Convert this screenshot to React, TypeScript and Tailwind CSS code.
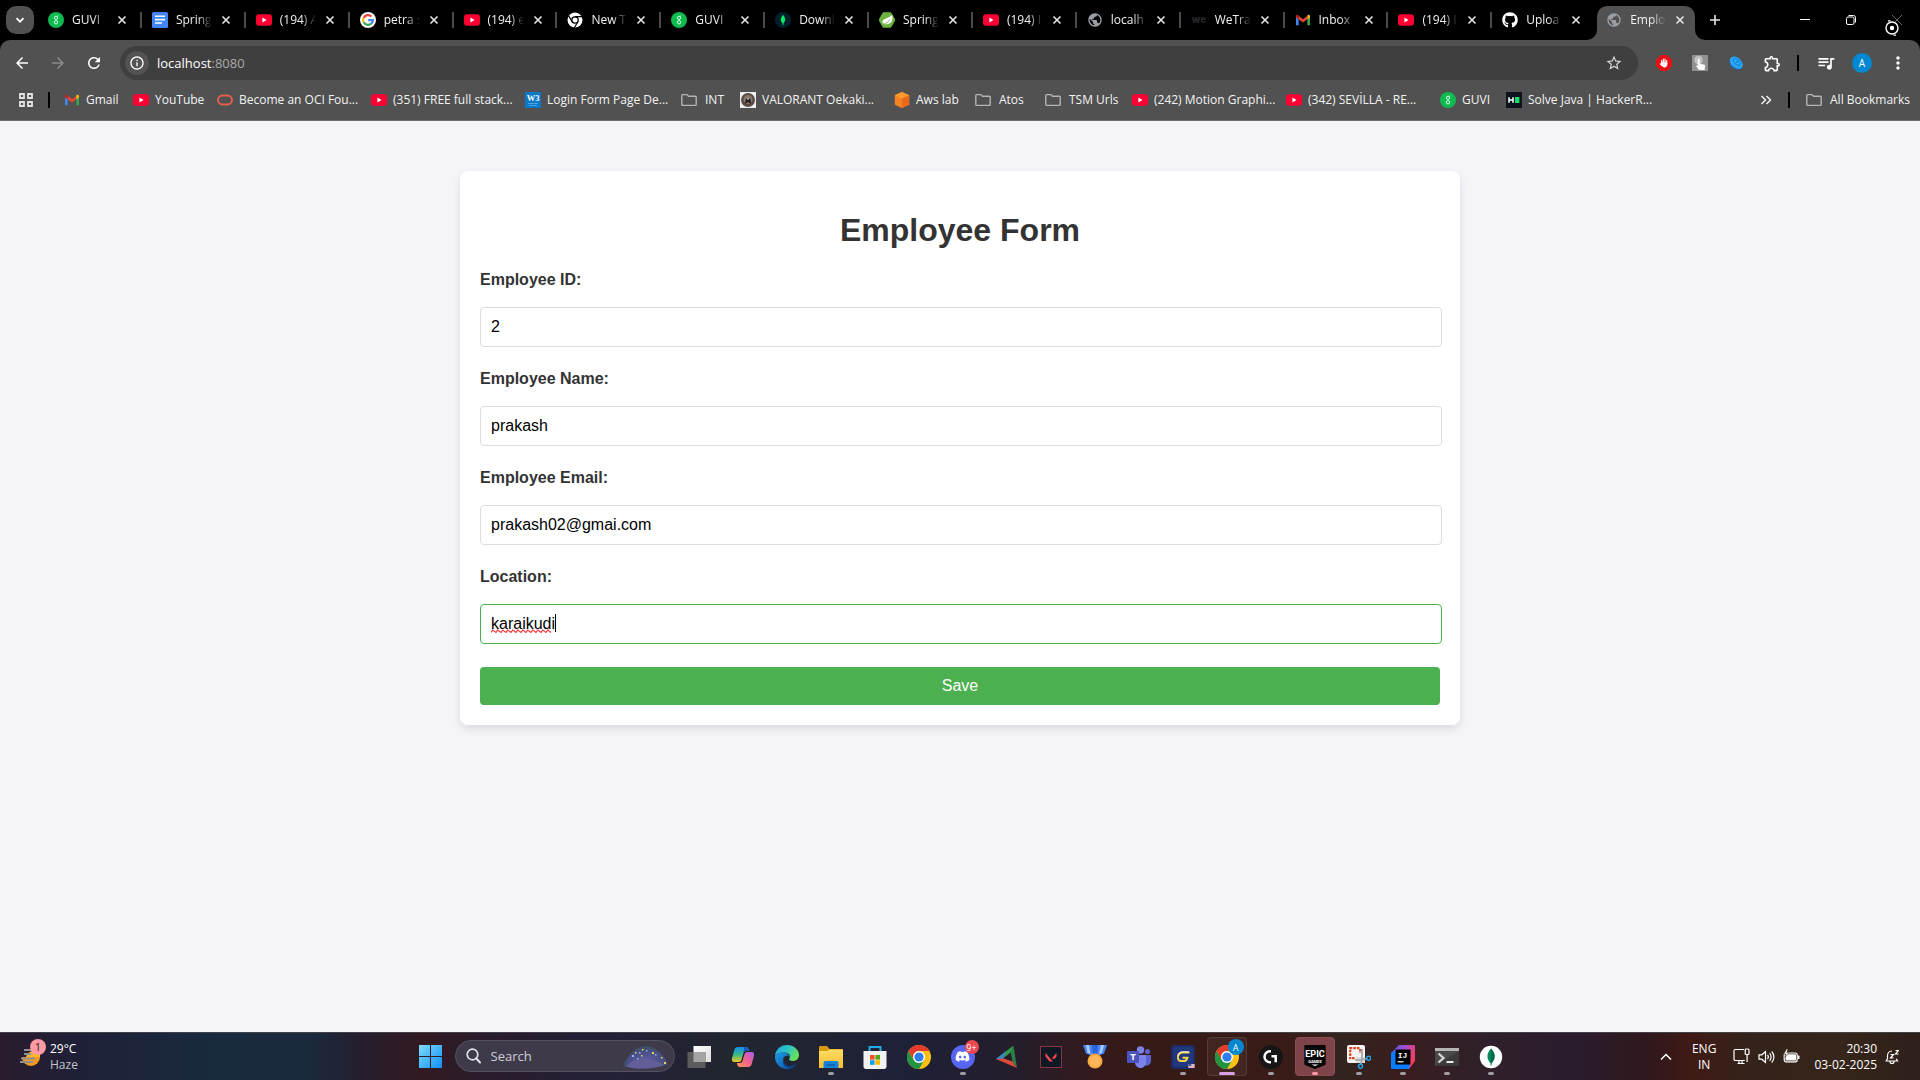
import React from 'react';
import { FaGithub, FaDiscord } from 'react-icons/fa';
import {
  MdArrowBack,
  MdArrowForward,
  MdRefresh,
  MdStarOutline,
  MdOutlineExtension,
  MdQueueMusic,
  MdMoreVert,
  MdPublic,
  MdInfoOutline,
} from 'react-icons/md';

type IconProps = { size?: number };

/* ---------- Site icons ---------- */

const Guvi = ({ size = 16 }: IconProps) => (
  <svg width={size} height={size} viewBox="0 0 16 16" className="shrink-0">
    <circle cx="8" cy="8" r="8" fill="#0fba4f" />
    <circle cx="8" cy="5.800" r="1.600" fill="none" stroke="#d8ffe6" strokeWidth="1" />
    <circle cx="8" cy="10.300" r="1.700" fill="none" stroke="#d8ffe6" strokeWidth="1" />
    <path d="M9.200 4.400l1-.8" stroke="#d8ffe6" strokeWidth="1" />
  </svg>
);

const YouTube = ({ size = 16 }: IconProps) => (
  <svg width={size} height={size} viewBox="0 0 16 16" className="shrink-0">
    <rect x="0" y="2.200" width="16" height="11.600" rx="3" fill="#ff0033" />
    <path d="M6.400 5.600v4.800L10.500 8z" fill="#fff" />
  </svg>
);

const Docs = ({ size = 16 }: IconProps) => (
  <svg width={size} height={size} viewBox="0 0 16 16" className="shrink-0">
    <rect width="16" height="16" rx="1.500" fill="#4285f4" />
    <path d="M3 4.200h10M3 7.600h10M3 11h7" stroke="#fff" strokeWidth="1.600" />
  </svg>
);

const Google = ({ size = 16 }: IconProps) => (
  <svg width={size} height={size} viewBox="0 0 16 16" className="shrink-0">
    <circle cx="8" cy="8" r="8" fill="#fff" />
    <g fill="none" strokeWidth="2.200">
      <path d="M11.400 4.500A4.900 4.900 0 0 0 3.700 5.700" stroke="#ea4335" />
      <path d="M3.700 5.700a4.900 4.900 0 0 0 0 4.600" stroke="#fbbc05" />
      <path d="M3.700 10.300a4.900 4.900 0 0 0 7.400 1.400" stroke="#34a853" />
      <path d="M11.100 11.700A4.900 4.900 0 0 0 12.900 8.200H8.200" stroke="#4285f4" />
    </g>
  </svg>
);

const ChromeMono = ({ size = 16 }: IconProps) => (
  <svg width={size} height={size} viewBox="0 0 16 16" className="shrink-0">
    <circle cx="8" cy="8" r="7.500" fill="#fff" />
    <circle cx="8" cy="8" r="3.200" fill="#fff" stroke="#000" strokeWidth="1.300" />
    <path d="M8 4.600h7M5.200 9.700L1.600 3.900M10.800 9.700l-3.400 6" stroke="#000" strokeWidth="1.200" />
  </svg>
);

const MongoTab = ({ size = 16 }: IconProps) => (
  <svg width={size} height={size} viewBox="0 0 16 16" className="shrink-0">
    <circle cx="8" cy="8" r="8" fill="#001e2b" />
    <path d="M8 2.800c2.800 3 2.800 6.600 0 9-2.800-2.400-2.800-6 0-9z" fill="#00ed64" />
    <path d="M8 9v4.400" stroke="#00ed64" strokeWidth=".8" />
  </svg>
);

const SpringLeaf = ({ size = 16 }: IconProps) => (
  <svg width={size} height={size} viewBox="0 0 16 16" className="shrink-0">
    <path d="M4.200.8h7.600L16 8l-4.200 7.200H4.200L0 8z" fill="#6db33f" stroke="#6db33f" strokeLinejoin="round" />
    <path d="M13.200 3c.9 4.300-.2 8.800-5 9.200-2 .2-3.600-.3-4.700-1.200C2.400 6.300 9 6.800 13.200 3z" fill="#fff" />
    <path d="M3.400 12.600c3.200-.8 5.800-2.400 7.600-5" stroke="#6db33f" strokeWidth=".8" fill="none" />
  </svg>
);

const Globe = ({ size = 16 }: IconProps) => (
  <span className="shrink-0 text-[#9aa0a6]">
    <MdPublic size={size} />
  </span>
);

const We = ({ size = 16 }: IconProps) => (
  <svg width={size} height={size} viewBox="0 0 16 16" className="shrink-0">
    <text x="8" y="10.500" textAnchor="middle" fontSize="10" fontWeight="800" fontFamily="Inter, sans-serif" fill="#26262a">
      we
    </text>
  </svg>
);

const Gmail = ({ size = 16 }: IconProps) => (
  <svg width={size} height={size} viewBox="0 0 16 16" className="shrink-0">
    <path d="M1 4v9.200h2.600V6.500z" fill="#4285f4" />
    <path d="M15 4v9.200h-2.600V6.500z" fill="#34a853" />
    <path d="M3.600 3.800L8 7.200l4.400-3.400v3.400L8 10.600 3.600 7.200z" fill="#ea4335" />
    <path d="M1 4.500c0-1.800 1.500-2.100 2.600-1.200v3.900L1 5.400z" fill="#c5221f" />
    <path d="M15 4.500c0-1.800-1.500-2.100-2.600-1.200v3.900L15 5.400z" fill="#fbbc04" />
  </svg>
);

const Github = ({ size = 16 }: IconProps) => (
  <span className="shrink-0 text-white">
    <FaGithub size={size} />
  </span>
);

const Oracle = () => (
  <svg width={16} height={16} viewBox="0 0 16 16" className="shrink-0">
    <rect x="1" y="3.500" width="14" height="9" rx="4.500" fill="none" stroke="#e8604c" strokeWidth="1.900" />
  </svg>
);

const W3 = () => (
  <svg width={16} height={16} viewBox="0 0 16 16" className="shrink-0">
    <rect width="16" height="16" fill="#0a78c8" />
    <text x="8" y="8.500" textAnchor="middle" fontSize="8.500" fontWeight="700" fontFamily="Liberation Serif, serif" fill="#fff">
      W3
    </text>
    <path d="M3 11.500h10M4 13.500h8" stroke="#5fb0ea" strokeWidth=".8" />
  </svg>
);

const Folder = () => (
  <svg width={16} height={16} viewBox="0 0 16 16" className="mr-0.5 shrink-0">
    <path d="M.8 3.400c0-.5.4-.8.8-.8h4.300l1.600 1.700h6.900c.5 0 .8.400.8.800v7.500c0 .5-.3.800-.8.800H1.600c-.4 0-.8-.3-.8-.8z" fill="none" stroke="#b4b4b4" strokeWidth="1.400" />
  </svg>
);

const Oekaki = () => (
  <svg width={16} height={16} viewBox="0 0 16 16" className="shrink-0">
    <rect width="16" height="16" fill="#eee" />
    <circle cx="8" cy="8" r="7" fill="#5b4a44" />
    <circle cx="8" cy="7.500" r="4.500" fill="#8a7466" />
    <path d="M5 12l1-5 2-2 2.500 2 .5 5-3-2z" fill="#231d1e" />
    <circle cx="8" cy="6.500" r="1.200" fill="#9fb0bd" />
  </svg>
);

const Aws = () => (
  <svg width={16} height={16} viewBox="0 0 16 16" className="shrink-0">
    <path d="M8 0l7.200 3.200v9.600L8 16 .8 12.800V3.200z" fill="#f58220" />
    <path d="M8 0l7.200 3.200L8 6.600.8 3.200z" fill="#ff9a2e" />
    <path d="M8 6.600l7.200-3.400v9.600L8 16z" fill="#e8681c" />
  </svg>
);

const HackerRank = () => (
  <svg width={16} height={16} viewBox="0 0 16 16" className="shrink-0">
    <rect width="16" height="16" fill="#0e141e" />
    <path d="M3 5.200v5.600M7 5.200v5.600M3 8h4" stroke="#fff" strokeWidth="1.500" />
    <rect x="9" y="5" width="4.400" height="6" fill="#12e06a" />
  </svg>
);

/* ---------- Browser chrome ---------- */

const Cross = () => (
  <svg width="10" height="10" viewBox="0 0 10 10">
    <path d="M1.500 1.500l7 7M8.500 1.500l-7 7" stroke="#e6e6e6" strokeWidth="1.600" />
  </svg>
);

const tabs: { icon: React.FC<IconProps>; title: string }[] = [
  { icon: Guvi, title: 'GUVI' },
  { icon: Docs, title: 'Spring' },
  { icon: YouTube, title: '(194) A' },
  { icon: Google, title: 'petra s' },
  { icon: YouTube, title: '(194) e' },
  { icon: ChromeMono, title: 'New T' },
  { icon: Guvi, title: 'GUVI' },
  { icon: MongoTab, title: 'Downl' },
  { icon: SpringLeaf, title: 'Spring' },
  { icon: YouTube, title: '(194) I' },
  { icon: Globe, title: 'localh' },
  { icon: We, title: 'WeTra' },
  { icon: Gmail, title: 'Inbox' },
  { icon: YouTube, title: '(194) I' },
  { icon: Github, title: 'Uploa' },
  { icon: Globe, title: 'Emplo' },
];

function TabStrip() {
  return (
    <div className="flex h-10 items-stretch bg-black pl-1.5">
      <button aria-label="Search tabs" className="mr-[3px] mt-1.5 flex h-7 w-7 items-center justify-center rounded-[10px] bg-[#515151]">
        <svg width="10" height="10" viewBox="0 0 10 10">
          <path d="M1.500 3.200L5 6.700l3.500-3.500" fill="none" stroke="#fff" strokeWidth="1.700" />
        </svg>
      </button>
      <div className="flex min-w-0 flex-1">
        {tabs.map(({ icon: Icon, title }, i) => {
          const active = i === tabs.length - 1;
          return (
            <div key={i} className="relative flex min-w-0 flex-1 pt-1.5">
              {active && (
                <svg className="absolute bottom-0 -left-2 h-[10px] w-[10px]" viewBox="0 0 10 10">
                  <path d="M10 0v10H0A10 10 0 0 0 10 0z" fill="#515151" />
                </svg>
              )}
              {active && (
                <svg className="absolute bottom-0 -right-1.5 h-[10px] w-[10px]" viewBox="0 0 10 10">
                  <path d="M0 0v10h10A10 10 0 0 1 0 0z" fill="#515151" />
                </svg>
              )}
              <div
                className={
                  active
                    ? 'ml-0.5 mr-1 flex min-w-0 flex-1 items-center rounded-t-[10px] bg-[#515151] pb-1.5 pl-[9px]'
                    : 'ml-0.5 mr-1 flex min-w-0 flex-1 items-center pb-1.5 pl-[9px]'
                }
              >
                <Icon />
                <span className="ml-2 w-[36px] overflow-hidden whitespace-nowrap text-[12px] leading-4 text-[#f1f1f1] [mask-image:linear-gradient(to_right,black_60%,transparent)]">
                  {title}
                </span>
                <button aria-label="Close tab" className="ml-1.5 flex h-4 w-4 shrink-0 items-center justify-center">
                  <Cross />
                </button>
              </div>
              {i < tabs.length - 2 && <div className="absolute -right-px top-3 h-4 w-0.5 bg-[#4b4b4b]" />}
            </div>
          );
        })}
      </div>
      <div className="relative flex w-[221px] shrink-0 items-center pb-[7px]">
        <button aria-label="New tab" className="ml-2 mt-1.5 flex h-4 w-4 items-center justify-center">
          <svg width="12" height="12" viewBox="0 0 12 12">
            <path d="M6 1v10M1 6h10" stroke="#e8e8e8" strokeWidth="1.600" />
          </svg>
        </button>
        <button aria-label="Minimize" className="ml-[74px] mt-1.5 flex h-4 w-4 items-center justify-center">
          <svg width="10" height="10" viewBox="0 0 10 10">
            <path d="M0 4.500h10" stroke="#fff" />
          </svg>
        </button>
        <button aria-label="Restore" className="ml-[30px] mt-1.5 flex h-4 w-4 items-center justify-center">
          <svg width="10" height="10" viewBox="0 0 10 10">
            <rect x=".5" y="2" width="7.500" height="7.500" rx="1.500" fill="none" stroke="#fff" />
            <path d="M2.500.5h5a2 2 0 0 1 2 2v5" fill="none" stroke="#fff" />
          </svg>
        </button>
        <button aria-label="Close" className="ml-[30px] mt-1.5 flex h-4 w-4 items-center justify-center">
          <svg width="10" height="10" viewBox="0 0 10 10">
            <path d="M0 0l10 10M10 0L0 10" stroke="#666" />
          </svg>
        </button>
        <svg className="absolute right-5 top-5 h-4 w-4" viewBox="0 0 16 16">
          <circle cx="8" cy="8" r="6" fill="#000" stroke="#fff" strokeWidth="1.400" />
          <circle cx="8" cy="8" r="2.200" fill="#fff" />
          <path d="M4 .8h2.500M9.500 15.200H12" stroke="#fff" strokeWidth="1.200" />
        </svg>
      </div>
    </div>
  );
}

function Toolbar() {
  return (
    <div className="flex h-11 items-center px-3 pt-0.5 text-white">
      <button aria-label="Back" className="flex w-5 justify-center">
        <MdArrowBack size={18} />
      </button>
      <button aria-label="Forward" className="ml-4 flex w-5 justify-center text-[#8b8b8b]">
        <MdArrowForward size={18} />
      </button>
      <button aria-label="Reload" className="ml-4 flex w-5 justify-center">
        <MdRefresh size={18} />
      </button>
      <div className="ml-4 flex h-[34px] min-w-0 flex-1 items-center rounded-full bg-[#3f3f3f] pl-[5px] pr-[15px]">
        <button aria-label="Site information" className="flex h-6 w-6 items-center justify-center rounded-full bg-[#535353]">
          <MdInfoOutline size={16} />
        </button>
        <span className="ml-2 flex-1 text-[13px] leading-5">
          localhost<span className="text-[#a9a9a9]">:8080</span>
        </span>
        <button aria-label="Bookmark this tab" className="text-[#d5d5d5]">
          <MdStarOutline size={18} />
        </button>
      </div>
      <div className="ml-4 flex items-center gap-4">
        <button aria-label="Ad blocker" className="flex w-5 justify-center">
          <svg width="16" height="16" viewBox="0 0 16 16">
            <path d="M5 0h6l5 5v6l-5 5H5l-5-5V5z" fill="#e60f12" />
            <path d="M5.600 8.500V5.500M7.300 8V4.200M9 8V4.200M10.700 9V5.500M4.300 8.800l1.600 1.900" stroke="#fff" strokeWidth="1.200" strokeLinecap="round" />
            <path d="M5 7.500h6.300v2.600a2.800 2.800 0 0 1-5.200 1z" fill="#fff" />
          </svg>
        </button>
        <button aria-label="Clicker" className="flex w-5 justify-center">
          <svg width="16" height="16" viewBox="0 0 16 16">
            <rect width="16" height="16" rx="1" fill="#929292" />
            <circle cx="6.500" cy="5" r="3.800" fill="#bdbdbd" stroke="#d8d8d8" strokeWidth=".6" />
            <path d="M5.700 4.500a1 1 0 0 1 2 0v4l4.500 1.300c.7.300 1 .8.900 1.500L12.500 15H7l-3-4 .8-.8 1 .6z" fill="#fff" />
          </svg>
        </button>
        <button aria-label="Extension" className="flex w-5 justify-center">
          <svg width="16" height="16" viewBox="0 0 16 16">
            <path d="M1.800 4C.5 9 4 14 10 14.500l4.500-1z" fill="#1673e6" />
            <ellipse cx="8.400" cy="7.600" rx="7.300" ry="5" transform="rotate(42 8.400 7.600)" fill="#27a9f5" />
            <ellipse cx="9" cy="6.900" rx="4.400" ry="2.600" transform="rotate(42 9 6.900)" fill="none" stroke="#1478d8" strokeWidth=".9" />
            <circle cx="9.200" cy="6.700" r="1" fill="#1478d8" />
          </svg>
        </button>
        <button aria-label="Extensions" className="flex w-5 justify-center">
          <MdOutlineExtension size={19} />
        </button>
      </div>
      <div className="ml-[15px] h-4 w-0.5 bg-black" />
      <button aria-label="Media controls" className="ml-[17px] flex w-5 justify-center">
        <MdQueueMusic size={20} />
      </button>
      <button aria-label="Profile" className="ml-4 flex h-5 w-5 items-center justify-center rounded-full bg-[#0288d1] text-[10px] leading-none">
        A
      </button>
      <button aria-label="Menu" className="ml-4 flex w-5 justify-center">
        <MdMoreVert size={20} />
      </button>
    </div>
  );
}

const bookmarks: { icon: React.ReactNode; label: string; width: string }[] = [
  { icon: <Gmail />, label: 'Gmail', width: 'w-[69px]' },
  { icon: <YouTube />, label: 'YouTube', width: 'w-[84px]' },
  { icon: <Oracle />, label: 'Become an OCI Fou...', width: 'w-[154px]' },
  { icon: <YouTube />, label: '(351) FREE full stack...', width: 'w-[154px]' },
  { icon: <W3 />, label: 'Login Form Page De...', width: 'w-[156px]' },
  { icon: <Folder />, label: 'INT', width: 'w-[59px]' },
  { icon: <Oekaki />, label: 'VALORANT Oekaki...', width: 'w-[154px]' },
  { icon: <Aws />, label: 'Aws lab', width: 'w-[81px]' },
  { icon: <Folder />, label: 'Atos', width: 'w-[70px]' },
  { icon: <Folder />, label: 'TSM Urls', width: 'w-[87px]' },
  { icon: <YouTube />, label: '(242) Motion Graphi...', width: 'w-[154px]' },
  { icon: <YouTube />, label: '(342) SEVİLLA - RE...', width: 'w-[154px]' },
  { icon: <Guvi />, label: 'GUVI', width: 'w-[66px]' },
  { icon: <HackerRank />, label: 'Solve Java | HackerR...', width: 'w-[154px]' },
];

function BookmarksBar() {
  return (
    <div className="flex h-[37px] items-center border-b border-[#6f6f6f] pb-1 pl-[19px] pr-[10px] text-[12px] leading-4 text-[#f3f3f3]">
      <button aria-label="Apps">
        <svg width="14" height="14" viewBox="0 0 14 14">
          <path d="M1 1h4v4H1zM9 1h4v4H9zM1 9h4v4H1zM9 9h4v4H9z" fill="none" stroke="#e3e3e3" strokeWidth="1.800" />
        </svg>
      </button>
      <div className="ml-[15px] mr-3.5 h-4 w-0.5 bg-black" />
      <div className="flex min-w-0 flex-1">
        {bookmarks.map((b) => (
          <div key={b.label} className={`${b.width} shrink-0`}>
            <button className="flex items-center gap-1.5 whitespace-nowrap">
              {b.icon}
              {b.label}
            </button>
          </div>
        ))}
      </div>
      <button aria-label="More bookmarks">
        <svg width="12" height="10" viewBox="0 0 12 10">
          <path d="M1.500 1l4 4-4 4M6.500 1l4 4-4 4" fill="none" stroke="#f0f0f0" strokeWidth="1.500" />
        </svg>
      </button>
      <div className="ml-4 mr-4 h-4 w-0.5 bg-black" />
      <button className="flex items-center gap-1.5 whitespace-nowrap">
        <Folder />
        All Bookmarks
      </button>
    </div>
  );
}

/* ---------- Form ---------- */

const fields = [
  { id: 'employee-id', label: 'Employee ID:', value: '2' },
  { id: 'employee-name', label: 'Employee Name:', value: 'prakash' },
  { id: 'employee-email', label: 'Employee Email:', value: 'prakash02@gmai.com' },
  { id: 'location', label: 'Location:', value: 'karaikudi', focused: true },
];

function EmployeeForm() {
  return (
    <form
      onSubmit={(e) => e.preventDefault()}
      className="mx-auto mt-[50px] w-full max-w-[1000px] rounded-lg bg-white p-5 font-['Liberation_Sans',Arial,sans-serif] shadow-[0_4px_8px_rgba(0,0,0,0.1)]"
    >
      <h1 className="mb-[22px] mt-[21px] text-center text-[32px] font-bold leading-[37px] text-[#333]">Employee Form</h1>
      {fields.map((f) => (
        <div key={f.id} className="mb-[23px]">
          <label htmlFor={f.id} className="mb-[18px] block text-base font-bold leading-[18px] text-[#333]">
            {f.label}
          </label>
          <div className="relative">
            <input
              id={f.id}
              type="text"
              defaultValue={f.value}
              spellCheck={false}
              className={
                f.focused
                  ? 'block h-10 w-[calc(100%+2px)] rounded border border-[#4caf50] bg-white px-2.5 text-base text-black outline-none'
                  : 'block h-10 w-[calc(100%+2px)] rounded border border-[#ddd] bg-white px-2.5 text-base text-black outline-none'
              }
            />
            {f.focused && (
              <svg className="pointer-events-none absolute left-[11px] top-2.5 h-5 w-[66px]" viewBox="0 0 66 20">
                <path
                  d="M0 18.500l1.700-2.500 3.300 2.500 1.700-2.500 3.300 2.500 1.700-2.500 3.300 2.500 1.700-2.500 3.300 2.500 1.700-2.500 3.300 2.500 1.700-2.500 3.300 2.500 1.700-2.500 3.300 2.500 1.700-2.500 3.300 2.500 1.700-2.500 3.300 2.500 1.700-2.500 3.300 2.500 1.700-2.500 3.300 2.500 1.700-2.500 3.300 2.500"
                  fill="none"
                  stroke="#f0383c"
                  strokeWidth="1.200"
                />
                <path d="M64.500 0v18" stroke="#000" />
              </svg>
            )}
          </div>
        </div>
      ))}
      <button type="submit" className="block h-[38px] w-full rounded bg-[#4caf50] text-base leading-[18px] text-white">
        Save
      </button>
    </form>
  );
}

/* ---------- Taskbar ---------- */

const ChromeColor = () => (
  <svg width="24" height="24" viewBox="0 0 24 24">
    <circle cx="12" cy="12" r="12" fill="#fbc116" />
    <path d="M1.600 6A12 12 0 0 0 12 24l5.200-9L12 12 6.800 15z" fill="#229342" />
    <path d="M1.600 6A12 12 0 0 1 22.400 6H12a6 6 0 0 0-5.200 9z" fill="#e33b2e" />
    <circle cx="12" cy="12" r="6" fill="#fff" />
    <circle cx="12" cy="12" r="4.600" fill="#2d7df0" />
  </svg>
);

type Task = {
  name: string;
  art: React.ReactNode;
  running?: boolean;
  badge?: React.ReactNode;
  frame?: 'active' | 'alert';
};

const tasks: Task[] = [
  {
    name: 'Task view',
    art: (
      <svg width="24" height="24" viewBox="0 0 24 24">
        <defs>
          <linearGradient id="tv" x1="0" y1="0" x2="1" y2="1">
            <stop offset="0" stopColor="#fff" />
            <stop offset="1" stopColor="#dcdcdc" />
          </linearGradient>
        </defs>
        <rect x="6.500" y="1" width="17.500" height="16" fill="url(#tv)" />
        <rect x=".5" y="7" width="18" height="16" fill="#5c5c5c" />
        <rect x="6.500" y="7" width="12" height="10" fill="#a3a3a3" />
      </svg>
    ),
  },
  {
    name: 'Copilot',
    art: (
      <svg width="24" height="24" viewBox="0 0 24 24">
        <defs>
          <linearGradient id="cpA" x1="0" y1="0" x2="0" y2="1">
            <stop offset="0" stopColor="#1a8bec" />
            <stop offset=".5" stopColor="#33b98a" />
            <stop offset="1" stopColor="#f2c81e" />
          </linearGradient>
          <linearGradient id="cpB" x1="1" y1="0" x2="0" y2="1">
            <stop offset="0" stopColor="#a55cf0" />
            <stop offset=".5" stopColor="#f0628c" />
            <stop offset="1" stopColor="#ff9a52" />
          </linearGradient>
        </defs>
        <path d="M7 2h8c2 0 2.600 1.500 3.200 4h-3c-1.600 0-2.400.8-2.900 2.500l-1.600 5.700C10 16.500 9 17 7 17H3.500C1 17 .5 15 1.200 12.500L3.300 5C4 2.800 5 2 7 2z" fill="url(#cpA)" />
        <path d="M14.500 2c2 0 2.600 1.500 3.200 4h-3.200c-1 0-1.800.5-2.300 1.600L13.500 2z" fill="#1a55c8" />
        <path d="M17 22H9c-2 0-2.600-1.500-3.200-4h3c1.600 0 2.400-.8 2.900-2.500l1.600-5.700C14 7.500 15 7 17 7h3.500c2.500 0 3 2 2.300 4.500L20.700 19c-.7 2.200-1.700 3-3.700 3z" fill="url(#cpB)" />
      </svg>
    ),
  },
  {
    name: 'Edge',
    art: (
      <svg width="24" height="24" viewBox="0 0 24 24">
        <defs>
          <linearGradient id="edA" x1="0" y1="0" x2="1" y2=".4">
            <stop offset="0" stopColor="#1fa5dc" />
            <stop offset=".55" stopColor="#2cc3c8" />
            <stop offset="1" stopColor="#66e05a" />
          </linearGradient>
          <linearGradient id="edB" x1="0" y1="0" x2="1" y2="1">
            <stop offset="0" stopColor="#1b9be6" />
            <stop offset="1" stopColor="#0c55a8" />
          </linearGradient>
        </defs>
        <path d="M0 11C.6 4.600 5.600 0 12 0c7 0 12 5 12 10 0 3.700-2.800 6-6.200 6-2.800 0-4.300-1-3.500-2.200 1.400-2.100.6-6.300-4.600-6.300C5 7.500 1.500 8.500 0 11z" fill="url(#edA)" />
        <path d="M0 11.500C1.500 8.500 5 6.800 9 7.300c2.500.3 4.600 1.800 5 4-3-1.800-6 .2-5.800 3.700.2 4.500 4 7 7.800 7.500-1.200.9-2.600 1.500-4 1.500-6.600 0-12-5.400-12-12z" fill="url(#edB)" />
        <path d="M8.200 14.600c-.3 5 6.300 9.200 13.800 4-1.300 2.300-3.600 4.200-6.200 5C11.500 23.800 6 19.800 8.200 14.600z" fill="#0f4388" />
      </svg>
    ),
  },
  {
    name: 'File Explorer',
    running: true,
    art: (
      <svg width="24" height="24" viewBox="0 0 24 24">
        <defs>
          <linearGradient id="fe" x1="0" y1="0" x2="0" y2="1">
            <stop offset="0" stopColor="#ffdc66" />
            <stop offset="1" stopColor="#f7bd2e" />
          </linearGradient>
        </defs>
        <path d="M0 2.500C0 1.500.5 1 1.500 1H8l2.500 3H23c.6 0 1 .4 1 1v5H0z" fill="#d99a10" />
        <path d="M0 6h8l2.500-1.500H23c.6 0 1 .4 1 1V23H0z" fill="url(#fe)" />
        <path d="M4.500 23v-4.500c0-2 .8-2.500 2.500-2.500h10c1.700 0 2.500.5 2.500 2.500V23z" fill="#1584d8" />
        <path d="M8 20h8" stroke="#0a5ca4" strokeWidth="1.400" />
      </svg>
    ),
  },
  {
    name: 'Microsoft Store',
    art: (
      <svg width="24" height="24" viewBox="0 0 24 24">
        <path d="M6.500 7V2h11v5" fill="none" stroke="#22a9e8" strokeWidth="2" />
        <path d="M.5 6h23v15.500c0 1.600-.9 2.500-2.500 2.500H3C1.400 24 .5 23.100.5 21.500z" fill="#f1f1f1" />
        <rect x="7" y="10" width="4.600" height="4.600" fill="#f25022" />
        <rect x="12.400" y="10" width="4.600" height="4.600" fill="#55a513" />
        <rect x="7" y="15.200" width="4.600" height="4.600" fill="#10a0ea" />
        <rect x="12.400" y="15.200" width="4.600" height="4.600" fill="#ffb900" />
      </svg>
    ),
  },
  { name: 'Chrome', art: <ChromeColor /> },
  {
    name: 'Discord',
    running: true,
    art: (
      <span className="flex h-6 w-6 items-center justify-center rounded-full bg-[#5865f2] text-white">
        <FaDiscord size={15} />
      </span>
    ),
    badge: (
      <span className="absolute right-1.5 top-[7px] flex h-3.5 w-3.5 items-center justify-center rounded-full bg-[#ed4850] text-[9px] leading-none text-white">
        9+
      </span>
    ),
  },
  {
    name: 'Prism',
    art: (
      <svg width="24" height="24" viewBox="0 0 24 24">
        <path d="M18.500.5L1 14l8-1.500 7-5z" fill="#2f9a4a" />
        <path d="M18.500.5L22 23l-5-7-1.500-9z" fill="#2a7f45" />
        <path d="M1 14l10-8-2 6.500-1 2.500z" fill="#3b86c6" />
        <path d="M1 14l21 9-5-7-8-2.500z" fill="#e04a3d" />
        <path d="M15.500 7.500l1.800 8.700-8.300-2.700z" fill="#281d26" />
      </svg>
    ),
  },
  {
    name: 'Valorant',
    art: (
      <svg width="24" height="24" viewBox="0 0 24 24">
        <rect x="1.500" y="1.500" width="21" height="21" fill="#0f1923" stroke="#8c3340" />
        <path d="M6.500 8v3.500l4 5h3.300zM17.500 8v3.500l-1.800 2.200h-3z" fill="#ff4655" />
      </svg>
    ),
  },
  {
    name: 'Medal',
    art: (
      <svg width="24" height="24" viewBox="0 0 24 24">
        <path d="M0 0h24l-3 8.500-9 3.500-9-3.500z" fill="#4387f5" />
        <path d="M3 0h3l1.500 9-3-1zM18 0h3l-2 8-3 1z" fill="#a9cbff" />
        <path d="M9 0h6l-1 10h-4z" fill="#2f62dd" />
        <circle cx="12" cy="16" r="7.500" fill="#f5a742" />
        <circle cx="12" cy="16" r="5.500" fill="#ffb65c" />
      </svg>
    ),
  },
  {
    name: 'Teams',
    art: (
      <svg width="24" height="24" viewBox="0 0 24 24">
        <circle cx="20.500" cy="6.500" r="2.600" fill="#5b62cf" />
        <circle cx="13.500" cy="5" r="3.700" fill="#7b83eb" />
        <path d="M17 10h6c.6 0 1 .4 1 1v5a4.500 4.500 0 0 1-6 4.200z" fill="#5b62cf" />
        <path d="M8 10h11v7.500c0 3-2.500 5.500-5.500 5.500S8 20.500 8 17.500z" fill="#7b83eb" />
        <rect x="0" y="6" width="12" height="12" rx="1" fill="#4b53bc" />
        <text x="6" y="15.200" textAnchor="middle" fontSize="9.500" fontWeight="700" fontFamily="Open Sans, sans-serif" fill="#fff">
          T
        </text>
      </svg>
    ),
  },
  {
    name: 'Game launcher',
    running: true,
    art: (
      <svg width="24" height="24" viewBox="0 0 24 24">
        <rect width="24" height="24" rx="3" fill="#1d2b66" />
        <rect x="2" y="2" width="20" height="20" rx="3" fill="#22387e" />
        <path d="M18.500 7.500h-6.700c-2.500 0-4 1-4.700 3.500-.7 3 .6 5 3.100 5h3.300c1.700 0 2.300-1 2.900-3.200h-4.900" fill="none" stroke="#f0d24a" strokeWidth="2" />
        <path d="M18 6.800h-6.500c-2.300 0-4 1.200-4.700 3.700" fill="none" stroke="#fff" strokeWidth=".9" />
        <rect x="17.500" y="19" width="6" height="4" fill="#f4f4f4" />
        <path d="M17.500 20h6M17.500 22h6" stroke="#e3505b" strokeWidth=".8" />
        <rect x="17.500" y="19" width="2.800" height="2" fill="#3a58b8" />
      </svg>
    ),
  },
  {
    name: 'Chrome profile',
    frame: 'active',
    art: <ChromeColor />,
    badge: (
      <span className="absolute right-[5px] top-1.5 flex h-4 w-4 items-center justify-center rounded-full bg-[#0288d1] text-[9px] leading-none text-white">
        A
      </span>
    ),
  },
  {
    name: 'Logitech G Hub',
    running: true,
    art: (
      <svg width="24" height="24" viewBox="0 0 24 24">
        <circle cx="12" cy="12" r="12" fill="#161616" />
        <path d="M12 6.300h-1A5.500 5.500 0 0 0 11 17.300h1" fill="none" stroke="#fff" strokeWidth="2.500" />
        <path d="M12.500 11.200h4.200v6" fill="none" stroke="#fff" strokeWidth="2.500" />
      </svg>
    ),
  },
  {
    name: 'Epic Games',
    frame: 'alert',
    art: (
      <svg width="24" height="24" viewBox="0 0 24 24">
        <path d="M2.500 0h19c.8 0 1.200.4 1.200 1.200V18.500c0 1-.3 1.400-1.200 1.800L12 24l-9.500-3.700c-.9-.4-1.200-.8-1.200-1.800V1.200C1.300.4 1.700 0 2.500 0z" fill="#080808" />
        <text x="12" y="12" textAnchor="middle" fontSize="9" fontWeight="700" fontFamily="Roboto, sans-serif" fill="#fff">
          EPIC
        </text>
        <text x="12" y="17.500" textAnchor="middle" fontSize="4" fontWeight="700" fontFamily="Roboto, sans-serif" fill="#fff">
          GAMES
        </text>
        <path d="M8.500 19.500h7L12 21z" fill="#fff" />
      </svg>
    ),
  },
  {
    name: 'Snipping Tool',
    running: true,
    art: (
      <svg width="24" height="24" viewBox="0 0 24 24">
        <rect x="0" y="0" width="18" height="18" rx="2" fill="#f4f4f4" />
        <path d="M9 12h9v6H9z" fill="#dcdcdc" />
        <path d="M12.500 3.200H3.200v11M5 13.200h3M13.200 4v4" fill="none" stroke="#d9481c" strokeWidth="2.200" strokeDasharray="2.600 1" />
        <path d="M15 4v11.500l-1.500 4M8 14.800h7l5-1.300" fill="none" stroke="#a4a9ae" strokeWidth="1.800" />
        <circle cx="13.500" cy="21.300" r="2" fill="none" stroke="#25a4e8" strokeWidth="1.500" />
        <circle cx="21.700" cy="13.300" r="2" fill="none" stroke="#25a4e8" strokeWidth="1.500" />
      </svg>
    ),
  },
  {
    name: 'IntelliJ IDEA',
    running: true,
    art: (
      <svg width="24" height="24" viewBox="0 0 24 24">
        <defs>
          <linearGradient id="ij" x1="0" y1="0" x2="1" y2=".5">
            <stop offset="0" stopColor="#3c66f0" />
            <stop offset=".5" stopColor="#a24ccf" />
            <stop offset="1" stopColor="#ff3a5e" />
          </linearGradient>
        </defs>
        <path d="M8 0h14c1.500 0 2 .5 2 2v14l-6 8H2c-1.500 0-2-.5-2-2V8z" fill="url(#ij)" />
        <path d="M0 8l5-2v13h14l-1 5H2c-1.500 0-2-.5-2-2z" fill="#0a7cff" />
        <rect x="4.500" y="4.500" width="15" height="15" fill="#000" />
        <text x="11.500" y="13" textAnchor="middle" fontSize="8" fontWeight="700" fontFamily="Liberation Mono, monospace" fill="#fff">
          IJ
        </text>
        <path d="M6.500 16.800h6" stroke="#fff" strokeWidth="1.200" />
      </svg>
    ),
  },
  {
    name: 'Terminal',
    running: true,
    art: (
      <svg width="24" height="24" viewBox="0 0 24 24">
        <rect x="0" y="3" width="24" height="18" rx="1" fill="#4a4a4a" />
        <rect x="0" y="3" width="24" height="3" fill="#b5b5b5" />
        <path d="M0 21L24 6v15z" fill="#3a3a3a" />
        <path d="M3.500 8.500l5 4.500-5 4.500" fill="none" stroke="#d5d5d5" strokeWidth="2.300" />
        <path d="M11.500 17h7" stroke="#fff" strokeWidth="1.800" />
      </svg>
    ),
  },
  {
    name: 'MongoDB Compass',
    running: true,
    art: (
      <svg width="24" height="24" viewBox="0 0 24 24">
        <circle cx="12" cy="12" r="11.200" fill="#fff" />
        <path d="M12 3.500c5 5.500 4.500 11 0 15-4.500-4-5-9.500 0-15z" fill="#00895e" />
        <path d="M12 3.500c5 5.500 4.500 11 0 15z" fill="#006a4a" />
        <path d="M12 17v3.500" stroke="#006a4a" strokeWidth="1" />
      </svg>
    ),
  },
];

const frameClass = {
  active: 'absolute inset-x-0.5 inset-y-1 rounded border border-white/10 bg-white/5',
  alert: 'absolute inset-x-0.5 inset-y-1 rounded border border-[#8c4c54] bg-[#7f434a]',
};

function Taskbar() {
  return (
    <footer className="flex h-12 items-stretch border-t border-[#43424a] bg-[linear-gradient(90deg,#2b1c2e_0%,#1f2038_4%,#182a3e_11%,#1a2a3d_16%,#261e2e_19%,#331a22_22%,#2a1c2c_25%,#222138_32%,#22262f_38%,#1e2138_47%,#251d2b_53%,#351a1d_57%,#361a15_60%,#391b18_67%,#33241f_70%,#3a1d1e_73%,#30202a_77%,#2a1c2c_82%,#30181c_86%,#401a15_88%,#34231a_91%,#35251a_96%,#2e1f1a_100%)] text-white">
      <div className="flex flex-1 items-center">
        <button aria-label="Weather" className="relative ml-5 flex items-center gap-2 text-left text-[12px] leading-4">
          <svg width="22" height="28" viewBox="0 0 22 28">
            <path d="M2 14h18a9 9 0 0 1-18 0z" fill="#f39a1f" />
            <path d="M6 14a8 8 0 0 1 14-3v3z" fill="#ffb52a" />
            <path d="M4 7h8M4 11h7M1 15.500h14M0 19h13" stroke="#8d8f96" strokeWidth="1.800" />
          </svg>
          <span className="absolute -top-0.5 left-2.5 flex h-4 w-4 items-center justify-center rounded-full bg-[#ff99a4] text-[11px] leading-none text-[#2a2020]">
            1
          </span>
          <span>
            <span className="block">29°C</span>
            <span className="block text-[#c4c4cc]">Haze</span>
          </span>
        </button>
      </div>
      <div className="flex pl-7">
        <button aria-label="Start" className="mr-2 flex w-8 items-center justify-center">
          <svg width="23" height="23" viewBox="0 0 23 23">
            <defs>
              <linearGradient id="win" x1="0" y1="0" x2="1" y2="1">
                <stop offset="0" stopColor="#7fdcff" />
                <stop offset="1" stopColor="#0f8ff5" />
              </linearGradient>
            </defs>
            <path d="M0 0h11v11H0zM12 0h11v11H12zM0 12h11v11H0zM12 12h11v11H12z" fill="url(#win)" />
          </svg>
        </button>
        <label className="relative my-[7px] flex h-8 w-[220px] items-center overflow-hidden rounded-full border border-[#545260] bg-[#3e3a4a] pl-2.5">
          <svg width="15" height="16" viewBox="0 0 15 16" className="shrink-0">
            <circle cx="6.500" cy="6.500" r="5.300" fill="none" stroke="#e2e2e8" strokeWidth="1.700" />
            <path d="M10.300 10.500l3.700 4" stroke="#e2e2e8" strokeWidth="2" strokeLinecap="round" />
          </svg>
          <input
            type="text"
            aria-label="Search"
            placeholder="Search"
            className="ml-2.5 w-24 bg-transparent text-[13px] leading-5 outline-none placeholder:text-[#cfcfd6]"
          />
          <svg className="absolute right-1 top-1 h-[24px] w-[48px]" viewBox="0 0 48 24">
            <defs>
              <radialGradient id="hill" cx=".5" cy=".6" r=".6">
                <stop offset="0" stopColor="#5f59a6" />
                <stop offset=".6" stopColor="#485083" />
                <stop offset="1" stopColor="#3c4f63" />
              </radialGradient>
            </defs>
            <path d="M1 21C6 10 13 2 23 1c10-.5 18 8 23 18-8 5-36 6-45 2z" fill="url(#hill)" />
            <path d="M4 21c8-7 14-8 20-7s13 2 18 6c-9 4-30 5-38 1z" fill="#625f98" />
            <g fill="#8fb4ff">
              <rect x="10" y="10" width="2" height="2" />
              <rect x="17" y="7" width="1.500" height="1.500" />
              <rect x="15" y="13" width="1.500" height="1.500" />
              <rect x="24" y="5" width="1.500" height="1.500" />
              <rect x="33" y="9" width="1.500" height="1.500" />
            </g>
            <g fill="#f2cf5a">
              <rect x="13" y="7" width="1.500" height="1.500" />
              <rect x="20" y="4" width="1.500" height="1.500" />
              <rect x="30" y="7" width="2" height="2" />
              <rect x="19" y="10" width="1.500" height="1.500" />
              <rect x="39" y="12" width="1.500" height="1.500" />
              <rect x="42" y="17" width="2" height="2" />
            </g>
          </svg>
        </label>
        <div className="ml-0.5 flex">
          {tasks.map((t) => (
            <button key={t.name} aria-label={t.name} className="relative flex w-11 items-center justify-center">
              {t.frame && <span className={frameClass[t.frame]} />}
              <span className="relative">{t.art}</span>
              {t.badge}
              {t.running && <span className="absolute bottom-[5px] left-[19px] h-[3px] w-1.5 rounded-full bg-[#a09da3]" />}
              {t.frame === 'active' && <span className="absolute bottom-[5px] left-3.5 h-[3px] w-4 rounded-full bg-[#d9a0e8]" />}
              {t.frame === 'alert' && <span className="absolute bottom-[5px] left-[19px] h-[3px] w-1.5 rounded-full bg-[#ff99a4]" />}
            </button>
          ))}
        </div>
      </div>
      <div className="flex flex-1 items-center justify-end pr-[21px] text-[12px] leading-4">
        <button aria-label="Show hidden icons" className="mr-5">
          <svg width="12" height="8" viewBox="0 0 12 8">
            <path d="M1 6.500l5-5 5 5" fill="none" stroke="#fff" strokeWidth="1.500" />
          </svg>
        </button>
        <button className="mr-[17px] text-center">
          <span className="block">ENG</span>
          <span className="block">IN</span>
        </button>
        <button aria-label="Network, volume and battery" className="flex items-center gap-2">
          <svg width="17" height="17" viewBox="0 0 17 17" fill="none" stroke="#fff" strokeWidth="1.200">
            <path d="M11 1.500H2.300c-.8 0-1.300.5-1.300 1.300v8.400c0 .8.500 1.300 1.300 1.300h9.500M4.500 15.500h7M6 12.500v3M9 12.500v3" />
            <rect x="12.200" y="1" width="3.800" height="5.500" rx="1" />
            <path d="M14.100 6.500v7.500" />
          </svg>
          <svg width="17" height="16" viewBox="0 0 17 16" fill="none" stroke="#fff" strokeWidth="1.200">
            <path d="M1 5.800h2.800L7.500 2.500v11L3.800 10.200H1z" />
            <path d="M9.500 6a3 3 0 0 1 0 4M11.600 4.200a5.500 5.500 0 0 1 0 7.600M13.700 2.500a8 8 0 0 1 0 11" />
          </svg>
          <svg width="17" height="15" viewBox="0 0 17 15">
            <rect x="1.200" y="4" width="13" height="8.800" rx="2" fill="none" stroke="#fff" strokeWidth="1.200" />
            <rect x="2.500" y="5.200" width="10.500" height="6.400" rx=".8" fill="#fff" />
            <rect x="15" y="6.500" width="1.500" height="3.500" rx=".5" fill="#fff" />
            <path d="M3.500 0L.8 5h2.200L2 8.500 6 3.800H3.800L5 0z" fill="#fff" stroke="#34231a" strokeWidth=".5" />
          </svg>
        </button>
        <button className="ml-3.5 text-right">
          <span className="block">20:30</span>
          <span className="block">03-02-2025</span>
        </button>
        <button aria-label="Notifications" className="ml-2">
          <svg width="14" height="16" viewBox="0 0 14 16" fill="none" stroke="#fff" strokeWidth="1.200">
            <path d="M7 2C4.200 2 2.500 4.200 2.500 6.800v2.700L1.200 12h11.300l-1.200-2.300M5 12.500a2 2 0 0 0 4 0" />
            <path d="M5.500 5.500h3L5.500 9h3M10.500 1.500h3l-3 3.500h3" />
          </svg>
        </button>
      </div>
    </footer>
  );
}

export default function App() {
  return (
    <div className="flex min-h-screen flex-col bg-[#f4f4f9] font-['Open_Sans','Noto_Sans',sans-serif]">
      <header className="bg-black">
        <TabStrip />
        <div className="rounded-t-[10px] bg-[#515151]">
          <Toolbar />
          <BookmarksBar />
        </div>
      </header>
      <main className="flex-1">
        <EmployeeForm />
      </main>
      <Taskbar />
    </div>
  );
}
